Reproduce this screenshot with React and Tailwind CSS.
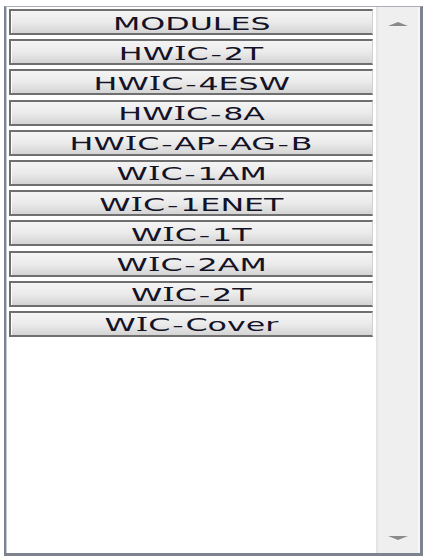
const modules = [
  "MODULES",
  "HWIC-2T",
  "HWIC-4ESW",
  "HWIC-8A",
  "HWIC-AP-AG-B",
  "WIC-1AM",
  "WIC-1ENET",
  "WIC-1T",
  "WIC-2AM",
  "WIC-2T",
  "WIC-Cover",
];

// the caption font is a stretched Verdana; DejaVu is close, "I" and "-" need a nudge
const Glyph = ({ ch }) => {
  if (ch === "I")
    return <span className="font-['DejaVu_Serif',serif]">I</span>;
  if (ch === "-") return <span className="px-[1px]">-</span>;
  return ch;
};

const ModuleButton = ({ label }) => {
  return (
    <div className="relative flex h-[26px] items-center justify-center border-t-2 border-b-2 border-l-2 border-[#6f6f6f] border-r border-r-[#d0d0d0] bg-gradient-to-b from-[#f4f4f4] via-[#ebebeb] to-[#d4d4d4]">
      <div className="absolute top-0 bottom-0 left-0 w-px bg-white" />
      <span className="mt-[3px] inline-block scale-x-[1.76] font-['DejaVu_Sans',Verdana,sans-serif] text-[18px] leading-none whitespace-nowrap text-[#141226]">
        {label.split("").map((ch, i) => (
          <Glyph key={i} ch={ch} />
        ))}
      </span>
    </div>
  );
};

const ScrollArrow = ({ down }) => (
  <svg width="22" height="6" viewBox="0 0 22 6">
    {down ? (
      <polygon points="1,1 21,1 11,5" fill="#8a8a8a" />
    ) : (
      <polygon points="1,5 21,5 11,1" fill="#8a8a8a" />
    )}
  </svg>
);

export default function App() {
  return (
    <div className="min-h-[560px] bg-white pt-[6px] pl-1">
      <div className="flex h-[550px] w-[419px] border-t border-r-[3px] border-b-[3px] border-l-2 border-t-[#a9aeb6] border-r-[#7d838c] border-b-[#7d838c] border-l-[#7d838c]">
        <div className="flex flex-1 border-l border-[#c3cad6]">
          <div className="flex flex-1 flex-col gap-[4.2px] pt-[2px] pl-[2px]">
            {modules.map((m) => (
              <ModuleButton key={m} label={m} />
            ))}
          </div>
          <div className="ml-[3px] flex w-[44px] flex-col items-center justify-between border-l-2 border-r-2 border-l-[#e4e4e4] border-r-[#f7f7f7] bg-[#efefef] pt-[14px] pb-[12px]">
            <ScrollArrow />
            <ScrollArrow down />
          </div>
        </div>
      </div>
    </div>
  );
}
